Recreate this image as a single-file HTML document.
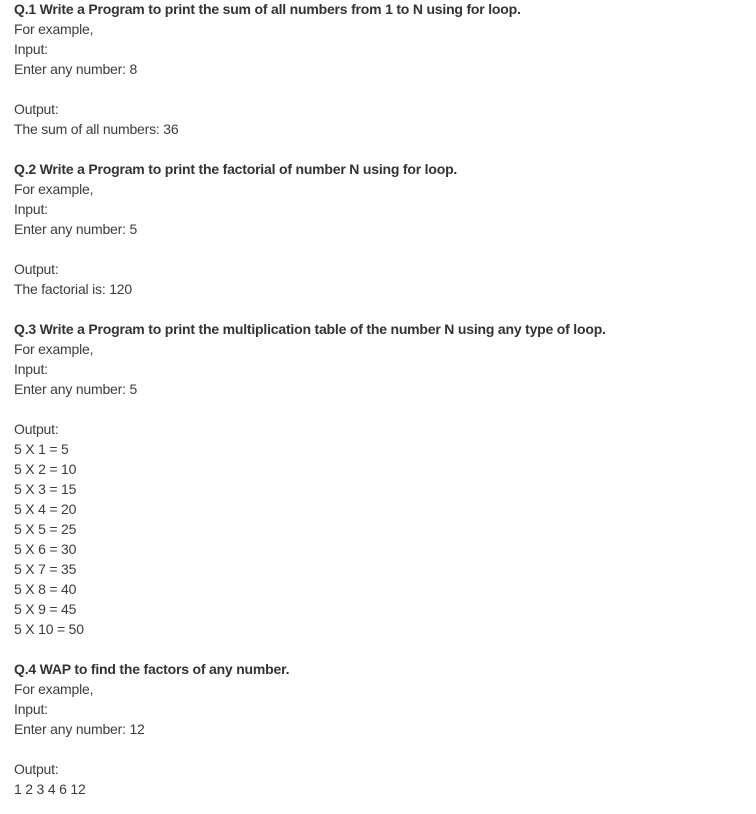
<!DOCTYPE html>
<html><head><meta charset="utf-8"><style>
body{margin:0;background:#fff;}
.c{padding:0 0 0 14px;margin-top:-1px;font-family:"Liberation Sans",sans-serif;font-size:14px;line-height:20px;color:#3c3c3c;letter-spacing:-0.2px;}
b{color:#333;}
</style></head><body><div class="c">
<b>Q.1 Write a Program to print the sum of all numbers from 1 to N using for loop.</b><br>
For example,<br>Input:<br>Enter any number: 8<br><br>Output:<br>The sum of all numbers: 36<br><br>
<b>Q.2 Write a Program to print the factorial of number N using for loop.</b><br>
For example,<br>Input:<br>Enter any number: 5<br><br>Output:<br>The factorial is: 120<br><br>
<b>Q.3 Write a Program to print the multiplication table of the number N using any type of loop.</b><br>
For example,<br>Input:<br>Enter any number: 5<br><br>Output:<br>
5 X 1 = 5<br>5 X 2 = 10<br>5 X 3 = 15<br>5 X 4 = 20<br>5 X 5 = 25<br>5 X 6 = 30<br>5 X 7 = 35<br>5 X 8 = 40<br>5 X 9 = 45<br>5 X 10 = 50<br><br>
<b>Q.4 WAP to find the factors of any number.</b><br>
For example,<br>Input:<br>Enter any number: 12<br><br>Output:<br>1 2 3 4 6 12
</div></body></html>
